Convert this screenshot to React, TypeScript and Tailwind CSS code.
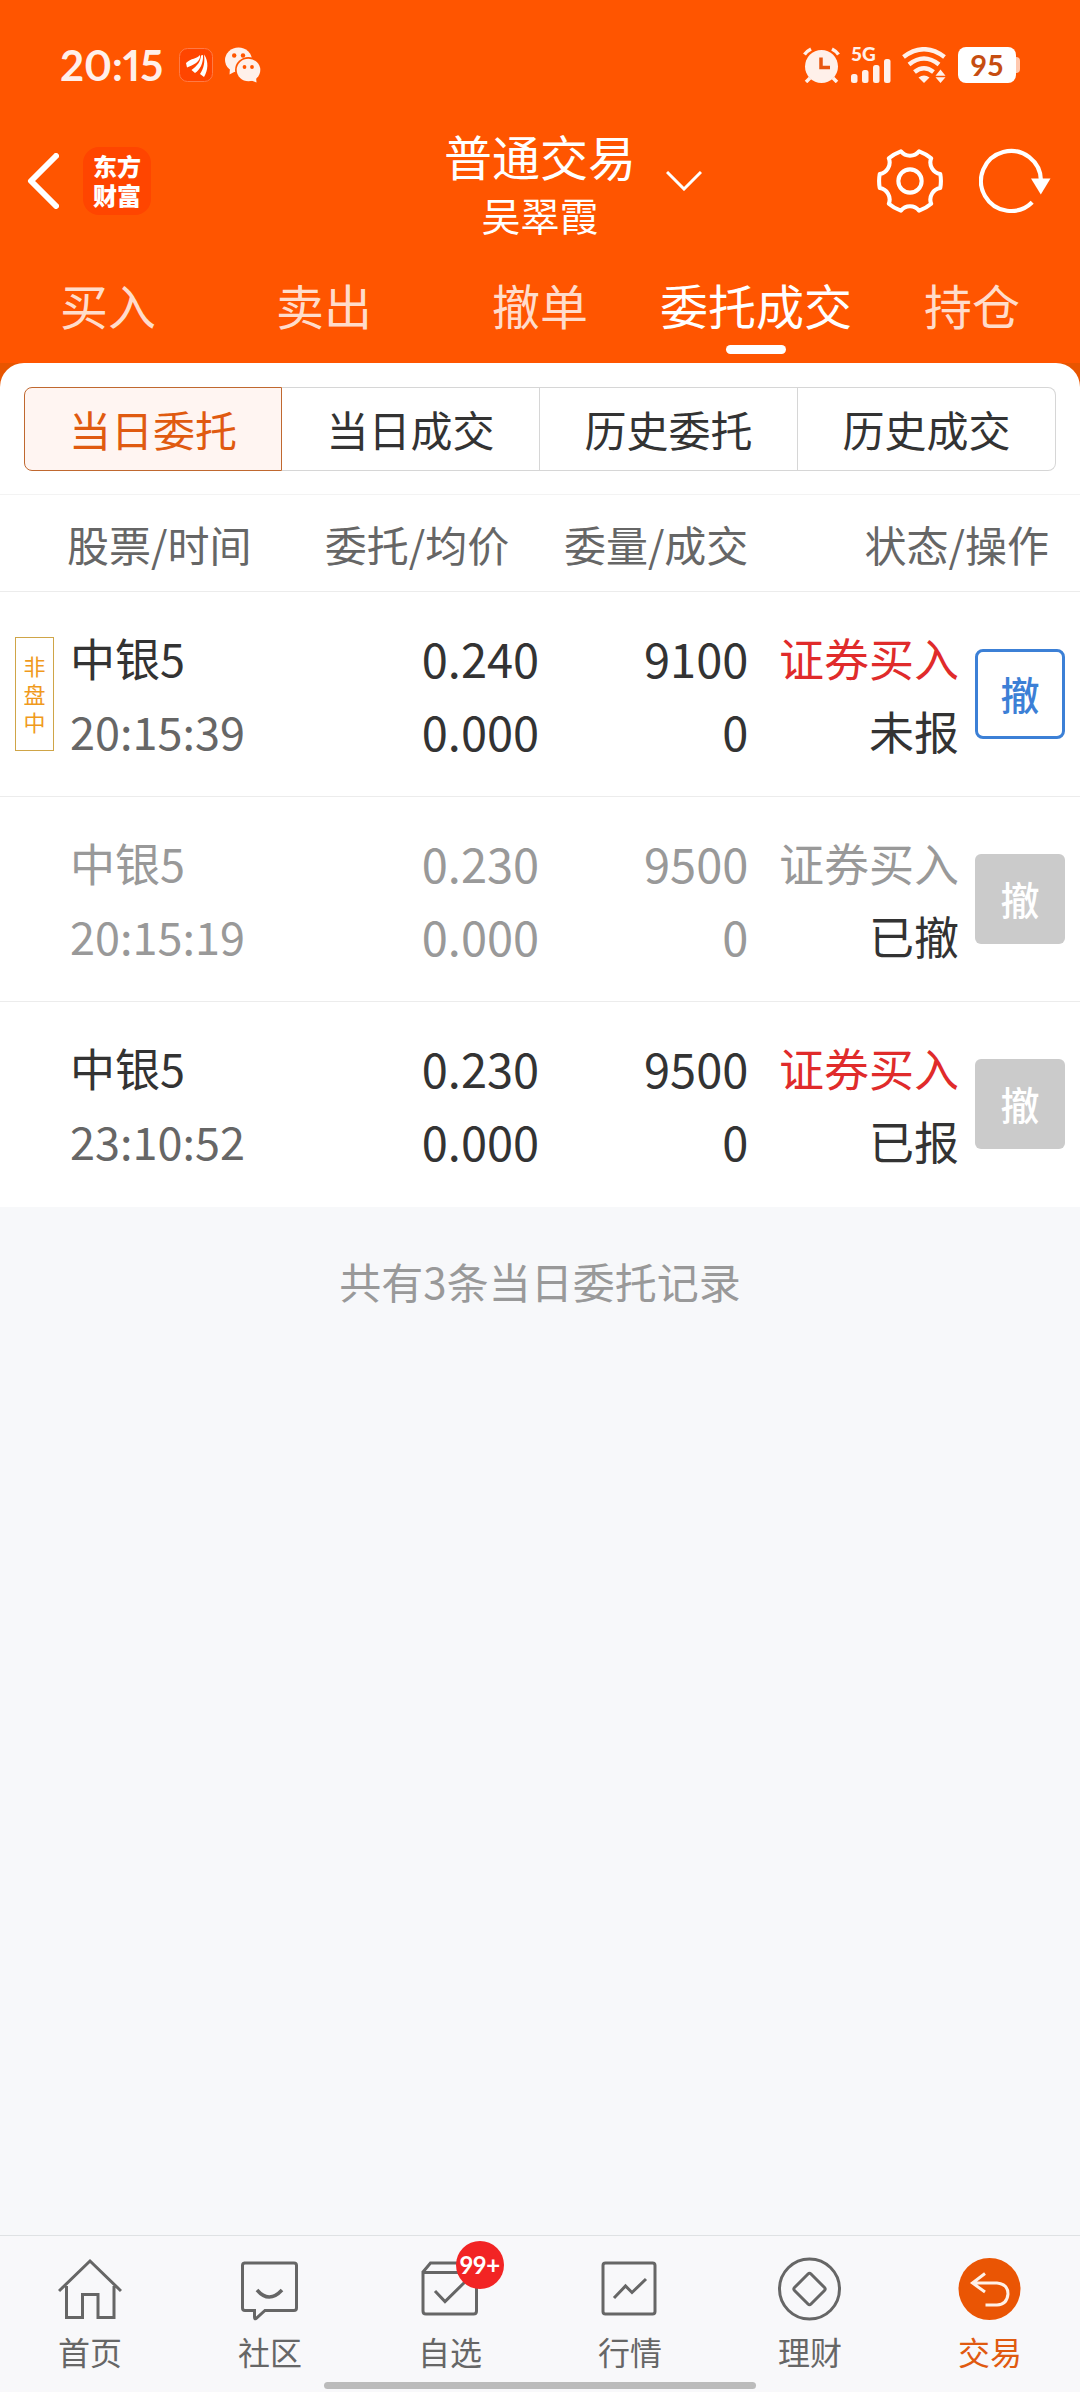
import React from 'react';

type Order = {
    name: string;
    time: string;
    price: string;
    avgPrice: string;
    amount: string;
    filled: string;
    side: string;
    status: string;
    offHours?: boolean;
    cancelled?: boolean;
    canCancel?: boolean;
};

const tabs = ['买入', '卖出', '撤单', '委托成交', '持仓'];
const segments = ['当日委托', '当日成交', '历史委托', '历史成交'];

const orders: Order[] = [
    {
        name: '中银5', time: '20:15:39', price: '0.240', avgPrice: '0.000',
        amount: '9100', filled: '0', side: '证券买入', status: '未报', offHours: true, canCancel: true,
    },
    {
        name: '中银5', time: '20:15:19', price: '0.230', avgPrice: '0.000',
        amount: '9500', filled: '0', side: '证券买入', status: '已撤', cancelled: true,
    },
    {
        name: '中银5', time: '23:10:52', price: '0.230', avgPrice: '0.000',
        amount: '9500', filled: '0', side: '证券买入', status: '已报',
    },
];

function AppBadgeIcon() {
    return (
        <svg className="w-[34px] h-[34px]" viewBox="0 0 34 34">
            <rect x="0.5" y="0.5" width="33" height="33" rx="8" fill="#ff4500" stroke="#ff7a45" />
            <g fill="#fff">
                <path d="M7 15C12 10 18 11 21 7C22 14 14 17 8 19.500Z" />
                <path d="M12.500 22C18 18 21.500 14 22 7.500L24 7C24.500 15 21 22 16 25Z" />
                <path d="M25 6.500C30 13 29 23 25 29L21 26C25 20 26 14 25 6.500Z" />
            </g>
        </svg>
    );
}

function WechatIcon() {
    return (
        <svg className="w-9 h-9" viewBox="0 0 36 36">
            <g fill="#fff0ea">
                <ellipse cx="13.500" cy="13" rx="13.500" ry="12.500" />
                <path d="M5 21L4.500 27.500L12 23.500Z" />
            </g>
            <ellipse cx="23.500" cy="23" rx="13.500" ry="13" fill="#ff5500" />
            <g fill="#fff0ea">
                <ellipse cx="23.500" cy="23" rx="11.800" ry="11.300" />
                <path d="M25 33L31.500 35.500L31 30Z" />
            </g>
            <g fill="#ff5500">
                <circle cx="9.200" cy="8.500" r="2.200" />
                <circle cx="18" cy="8.500" r="2.200" />
                <circle cx="19.500" cy="20" r="1.900" />
                <circle cx="27" cy="20" r="1.900" />
            </g>
        </svg>
    );
}

function AlarmIcon() {
    return (
        <svg className="w-[37px] h-9" viewBox="0 0 37 36" fill="none" stroke="#fff0ea" strokeWidth="3.500">
            <circle cx="18.500" cy="19.500" r="16.500" fill="#fff0ea" stroke="none" />
            <path d="M1.500 7.500Q4 4 8 2M35.500 7.500Q33 4 29 2M7 31L3 35M30 31L34 35" />
            <path d="M18 10.500V20.500H27" stroke="#e8560f" />
        </svg>
    );
}

function SignalIcon() {
    return (
        <svg className="w-10 h-6" viewBox="0 0 40 24" fill="#fff0ea">
            <rect x="0" y="15" width="6.500" height="9" rx="2.500" />
            <rect x="11" y="11" width="6.500" height="13" rx="2.500" />
            <rect x="22" y="6" width="6.500" height="18" rx="2.500" />
            <rect x="33" y="0" width="6.500" height="24" rx="2.500" />
        </svg>
    );
}

function WifiIcon() {
    return (
        <svg className="w-[45px] h-9" viewBox="0 0 45 36" fill="none" stroke="#fff0ea" strokeWidth="4.500">
            <path d="M1.500 10Q22 -5.500 42.500 10" />
            <path d="M7 17.500Q22 5.500 37 17.500" />
            <path d="M12.500 25Q22 17.500 31.500 25" />
            <path d="M16.500 30.500Q22 26.500 27.500 30.500L22 36Z" fill="#fff0ea" stroke="none" />
            <path d="M33.500 28.700H43.500L38.500 22.500ZM33.500 30.300H43.500L38.500 36Z" fill="#fff0ea" stroke="none" />
        </svg>
    );
}

function GearIcon() {
    return (
        <svg className="w-[66px] h-[66px]" viewBox="0 0 68 68" fill="none" stroke="#fff" strokeWidth="4.200" strokeLinejoin="round">
            <path d="M65.200 26.800Q66.500 34 65.200 41.200A12 12 0 0 0 55.800 57.400Q50.500 62 43.400 64.600A12 12 0 0 0 24.600 64.600Q17.500 62 12.200 57.400A12 12 0 0 0 2.800 41.200Q1.500 34 2.800 26.800A12 12 0 0 0 12.200 10.600Q17.500 6 24.600 3.400A12 12 0 0 0 43.400 3.400Q50.500 6 55.800 10.600A12 12 0 0 0 65.200 26.800Z" />
            <circle cx="34" cy="34" r="12" />
        </svg>
    );
}

function RefreshIcon() {
    return (
        <svg className="w-[72px] h-[66px]" viewBox="0 0 72 66" fill="none" stroke="#fff" strokeWidth="4.200">
            <path d="M53.200 54.200A30 30 0 1 1 62 33" />
            <path d="M52 30.500H71.500L61.800 46.500Z" fill="#fff" stroke="none" />
        </svg>
    );
}

const navItems = [
    {
        label: '首页',
        icon: <path d="M1 34L32 4L63 34M8.500 29V60.500H24.500V37.500H40V60.500H56V29" />,
    },
    {
        label: '社区',
        icon: (
            <>
                <path d="M6 6H56Q58.500 6 58.500 8.500V51Q58.500 53.500 56 53.500H27L18 61.500Q16.500 62.500 16.500 60V53.500H7Q4.500 53.500 4.500 51V8.500Q4.500 6 7 6" />
                <path d="M19 33Q31 47 44 33" strokeWidth="3.500" />
            </>
        ),
    },
    {
        label: '自选',
        badge: '99+',
        icon: (
            <>
                <path d="M5 15.500H58.500V54Q58.500 57 55.500 57H8Q5 57 5 54ZM5 15L12.500 6H51L58.500 15" />
                <path d="M17 34L27 44.500L49 23" />
            </>
        ),
    },
    {
        label: '行情',
        icon: (
            <>
                <rect x="5" y="6" width="52" height="51" rx="2.500" />
                <path d="M16 41L27.500 29L34 35.500L48 22" />
            </>
        ),
    },
    {
        label: '理财',
        icon: (
            <>
                <circle cx="31.500" cy="32" r="30" />
                <path d="M30 17Q31.500 15.500 33 17L46.500 30.500Q48 32 46.500 33.500L33 47Q31.500 48.500 30 47L16.500 33.500Q15 32 16.500 30.500Z" />
            </>
        ),
    },
    {
        label: '交易',
        active: true,
        icon: (
            <>
                <circle cx="31.500" cy="32" r="31" fill="#ea5504" stroke="none" />
                <path d="M27 16.500L14.500 26L27 35M15 26H39Q50 27 50 37Q49 47.500 39 48H27.500" stroke="#fff1e8" />
            </>
        ),
    },
];

function StatusBar() {
    return (
        <div className="flex items-center justify-between h-[130px] px-[60px] font-[Lato,sans-serif]">
            <div className="flex items-center">
                <span className="text-[42px] font-bold leading-none text-[#fff0ea] proportional-nums">20:15</span>
                <span className="ml-4"><AppBadgeIcon /></span>
                <span className="ml-3"><WechatIcon /></span>
            </div>
            <div className="flex items-center gap-[11px]">
                <AlarmIcon />
                <div className="flex flex-col h-9 justify-between">
                    <span className="h-3 text-[19px] font-black leading-[14px] text-[#fff0ea]">5G</span>
                    <SignalIcon />
                </div>
                <WifiIcon />
                <div className="flex items-center">
                    <span className="flex items-center justify-center w-[58px] h-9 rounded-lg bg-white text-[29px] font-bold text-[#c64d10]">95</span>
                    <span className="w-1 h-4 rounded-r-sm bg-[#ffc8ae]" />
                </div>
            </div>
        </div>
    );
}

function Header() {
    return (
        <header className="bg-[#ff5500] text-white">
            <StatusBar />
            <div className="grid grid-cols-[1fr_auto_1fr] items-center">
                <div className="flex items-center pl-[27px] pb-2 gap-6">
                    <button type="button" aria-label="返回">
                        <svg className="w-8 h-14" viewBox="0 0 32 56" fill="none" stroke="#fff" strokeWidth="6" strokeLinecap="round" strokeLinejoin="round">
                            <path d="M29 3L4 28L29 53" />
                        </svg>
                    </button>
                    <a href="#" className="flex flex-col items-center justify-center w-[68px] h-[68px] rounded-2xl bg-[#ff4500] text-[24px] leading-[29px] font-black font-[Lato,'Noto_Sans_CJK_SC',sans-serif]">
                        <span>东方</span>
                        <span>财富</span>
                    </a>
                </div>
                <div className="flex flex-col items-center gap-2.5 pb-0.5">
                    <h1 className="text-[48px] leading-[50px]">普通交易</h1>
                    <p className="text-[39px] leading-[48px]">吴翠霞</p>
                </div>
                <div className="flex items-center justify-between pl-[30px] pr-[29px] pb-2">
                    <button type="button" aria-label="切换账户">
                        <svg className="w-9 h-5" viewBox="0 0 36 20" fill="none" stroke="#fff" strokeWidth="3">
                            <path d="M1 1L18 18L35 1" />
                        </svg>
                    </button>
                    <div className="flex items-center gap-9">
                        <button type="button" aria-label="设置"><GearIcon /></button>
                        <button type="button" aria-label="刷新"><RefreshIcon /></button>
                    </div>
                </div>
            </div>
            <nav className="grid grid-cols-5 pt-[34px] pb-[9px]">
                {tabs.map((tab) => {
                    const active = tab === '委托成交';
                    return (
                        <a key={tab} href="#" className="flex flex-col items-center gap-[11px]">
                            <span className={active ? 'text-[48px] leading-[60px]' : 'text-[48px] leading-[60px] text-[#ffdccb]'}>{tab}</span>
                            <span className={active ? 'w-15 h-[9px] rounded-full bg-white' : 'w-15 h-[9px]'} />
                        </a>
                    );
                })}
            </nav>
        </header>
    );
}

function Segments() {
    return (
        <div className="grid grid-cols-4 mx-6 mt-6 mb-[23px]">
            {segments.map((label, i) => (
                <button
                    key={label}
                    type="button"
                    className={
                        i === 0
                            ? 'h-[84px] pb-0.5 text-[42px] border rounded-l-lg border-[#c0682f] bg-[#fff5f2] text-[#e05a10]'
                            : 'h-[84px] pb-0.5 text-[42px] border border-l-0 border-[#d6d6d6] text-[#333] last:rounded-r-lg'
                    }
                >
                    {label}
                </button>
            ))}
        </div>
    );
}

function OrderRow({ order }: { order: Order }) {
    const main = order.cancelled ? 'text-[#999]' : 'text-[#333]';
    const time = order.cancelled ? 'text-[#999]' : 'text-[#666]';
    const side = order.cancelled ? 'text-[#999]' : 'text-[#e02b2b]';

    return (
        <tr className="h-[205px] border-t border-[#ececec] leading-[73px]">
            <td>
                {order.offHours && (
                    <span className="flex flex-col items-center justify-center ml-[15px] pb-0.5 w-[39px] h-[114px] border border-[#cfa548] text-[22px] leading-[28px] text-[#f09a1c]">
                        <span>非</span>
                        <span>盘</span>
                        <span>中</span>
                    </span>
                )}
            </td>
            <td className="pl-0.5 text-[45px]">
                <div className={main}>{order.name}</div>
                <div className={time}>{order.time}</div>
            </td>
            <td className={`pr-1 text-right text-[47px] ${main}`}>
                <div>{order.price}</div>
                <div>{order.avgPrice}</div>
            </td>
            <td className={`text-right text-[47px] ${main}`}>
                <div>{order.amount}</div>
                <div>{order.filled}</div>
            </td>
            <td className="text-right text-[45px] whitespace-nowrap">
                <div className={side}>{order.side}</div>
                <div className="text-[#333]">{order.status}</div>
            </td>
            <td className="pr-[15px]">
                <button
                    type="button"
                    disabled={!order.canCancel}
                    className={
                        order.canCancel
                            ? 'block ml-auto pb-0.5 w-[90px] h-[90px] rounded-lg border-3 border-[#3c80d6] text-[39px] leading-none font-medium text-[#3c80d6]'
                            : 'block ml-auto pb-0.5 w-[90px] h-[90px] rounded-md bg-[#cbcbcb] text-[39px] leading-none font-medium text-white'
                    }
                >
                    撤
                </button>
            </td>
        </tr>
    );
}

function OrderTable() {
    return (
        <table className="w-full table-fixed border-collapse border-t border-[#f3f3f3]">
            <colgroup>
                <col className="w-[68px]" />
                <col className="w-[22%]" />
                <col className="w-[22%]" />
                <col className="w-[19%]" />
                <col />
                <col className="w-[121px]" />
            </colgroup>
            <thead>
                <tr className="h-[97px] text-[42px] text-[#666] whitespace-nowrap">
                    <th colSpan={2} className="pl-[67px] text-left font-normal">股票/时间</th>
                    <th className="pr-[34px] text-right font-normal">委托/均价</th>
                    <th className="text-right font-normal">委量/成交</th>
                    <th colSpan={2} className="pr-[31px] text-right font-normal">状态/操作</th>
                </tr>
            </thead>
            <tbody>
                {orders.map((order) => (
                    <OrderRow key={order.time} order={order} />
                ))}
            </tbody>
        </table>
    );
}

function BottomNav() {
    return (
        <footer className="border-t border-[#dfe2e4] bg-[#f8f8fa] pt-[21px] pb-[3px]">
            <nav className="grid grid-cols-6">
                {navItems.map((item) => (
                    <a key={item.label} href="#" className="flex flex-col items-center gap-2.5">
                        <span className="relative">
                            <svg className="w-16 h-16" viewBox="0 0 64 64" fill="none" stroke="#666" strokeWidth="3">
                                {item.icon}
                            </svg>
                            {item.badge && (
                                <span className="absolute -top-4 left-[38px] flex items-center justify-center w-12 h-12 rounded-full bg-[#f22424] text-[24px] font-bold text-white font-[Lato,sans-serif] proportional-nums">
                                    {item.badge}
                                </span>
                            )}
                        </span>
                        <span className={item.active ? 'text-[32px] leading-[40px] text-[#e05a10]' : 'text-[32px] leading-[40px] text-[#666]'}>
                            {item.label}
                        </span>
                    </a>
                ))}
            </nav>
            <div className="mx-auto mt-[11px] w-2/5 h-[7px] rounded-full bg-[#bbb]" />
        </footer>
    );
}

export default function App() {
    return (
        <div className="flex flex-col min-h-screen bg-[#f7f8fa] font-['Noto_Sans_CJK_SC',sans-serif]">
            <Header />
            <main className="flex-1">
                <div className="bg-[#e85500]">
                    <section className="flow-root rounded-t-3xl bg-white">
                        <Segments />
                        <OrderTable />
                    </section>
                </div>
                <p className="pt-11 text-center text-[42px] leading-[60px] text-[#999]">共有3条当日委托记录</p>
            </main>
            <BottomNav />
        </div>
    );
}
